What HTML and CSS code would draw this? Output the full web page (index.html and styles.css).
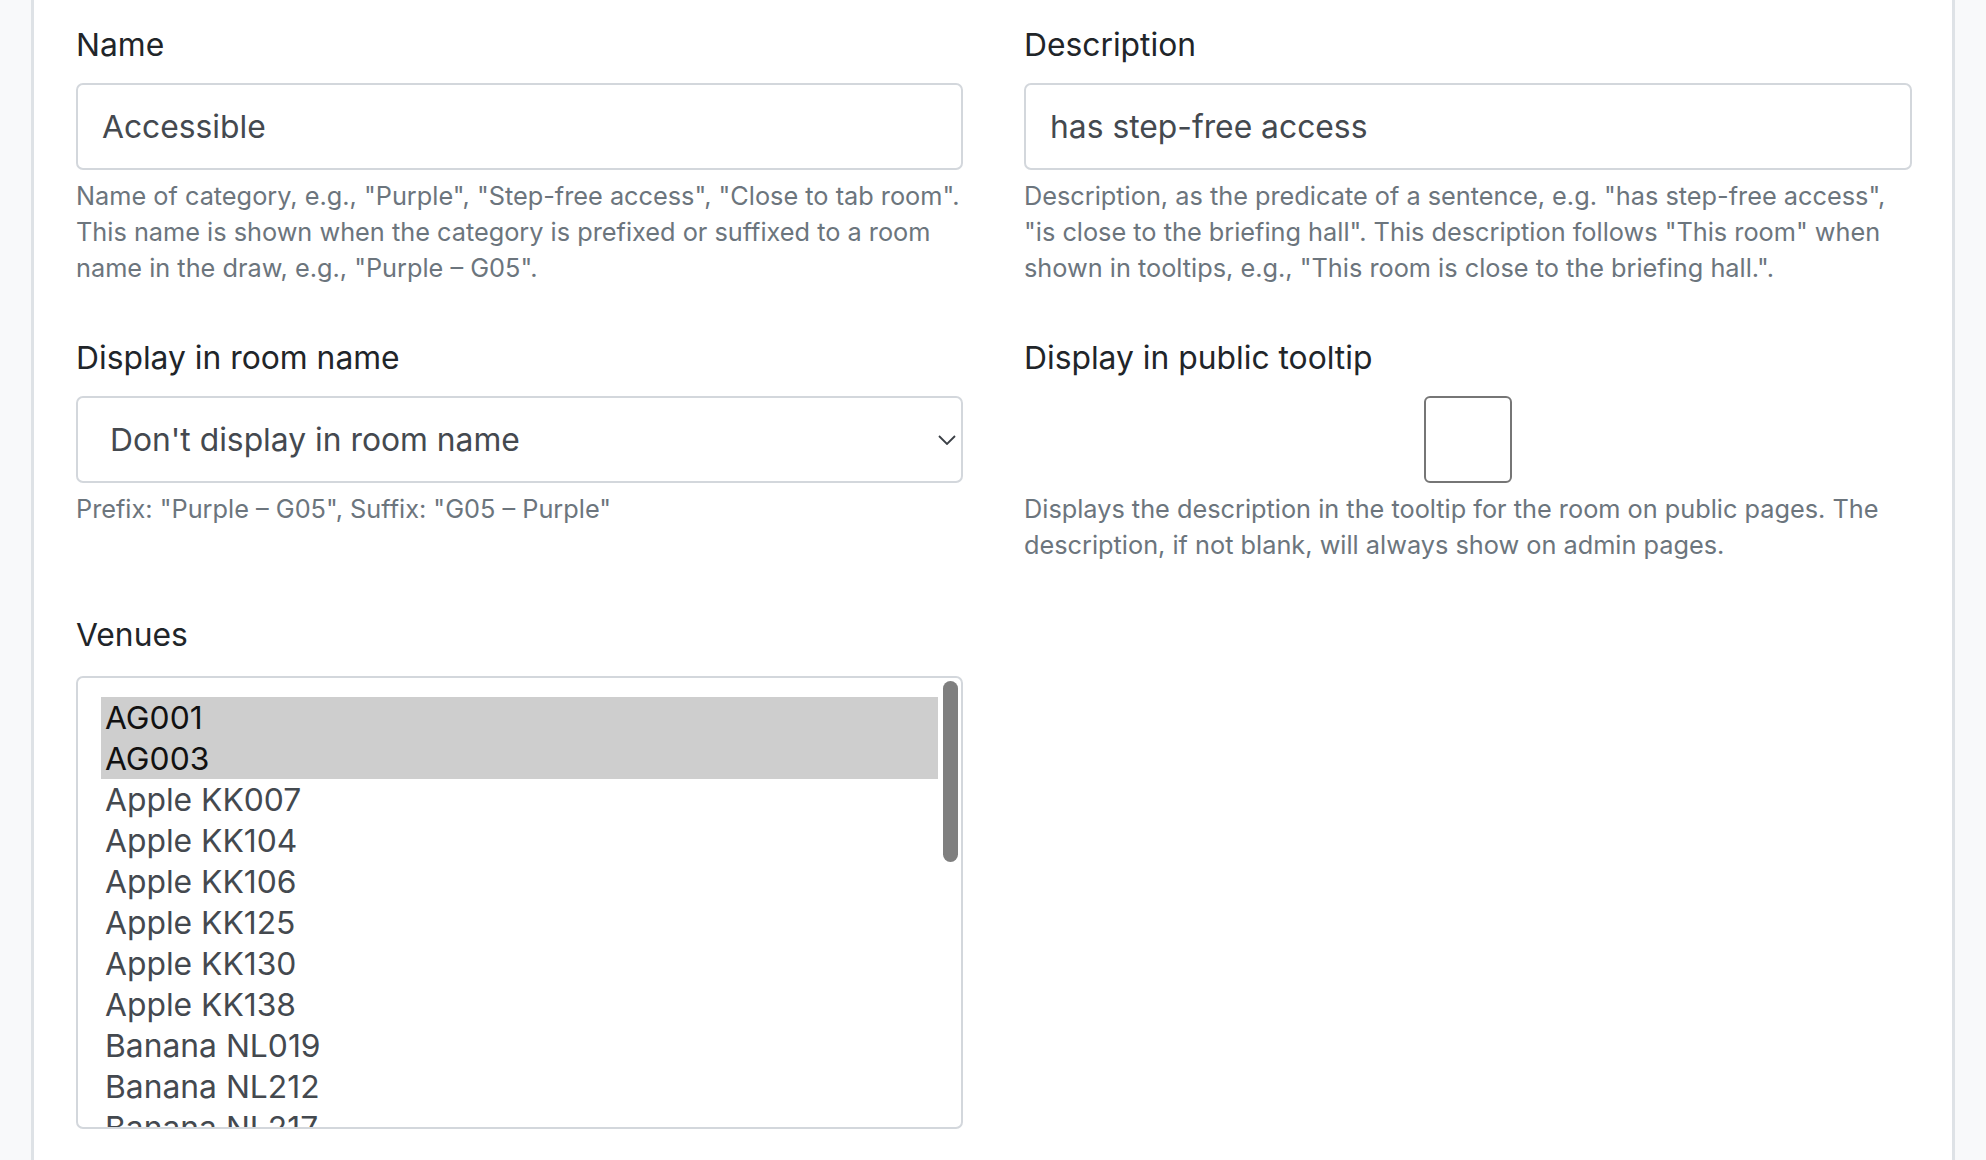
FILE: index.html
```html
<!DOCTYPE html>
<html lang="en">
<head>
<meta charset="utf-8">
<title>Room category</title>
<link rel="stylesheet" href="styles.css">
</head>
<body>
<div class="page">
  <main class="panel">
    <div class="form-grid">
      <div class="group">
        <label class="label">Name</label>
        <input class="control" type="text" value="Accessible">
        <p class="help">Name of category, e.g., "Purple", "Step-free access", "Close to tab room". This name is shown when the category is prefixed or suffixed to a room name in the draw, e.g., "Purple – G05".</p>
      </div>
      <div class="group">
        <label class="label">Description</label>
        <input class="control" type="text" value="has step-free access">
        <p class="help">Description, as the predicate of a sentence, e.g. "has step-free access", "is close to the briefing hall". This description follows "This room" when shown in tooltips, e.g., "This room is close to the briefing hall.".</p>
      </div>
      <div class="group">
        <label class="label">Display in room name</label>
        <div class="select">
          <span class="select-text">Don't display in room name</span>
          <svg class="chevron" width="18" height="10" viewBox="0 0 18 10"><polyline points="1,1 9,9 17,1" fill="none" stroke="#3a3f45" stroke-width="1.8"/></svg>
        </div>
        <p class="help">Prefix: "Purple – G05", Suffix: "G05 – Purple"</p>
      </div>
      <div class="group">
        <label class="label">Display in public tooltip</label>
        <div class="check-wrap"><span class="checkbox"></span></div>
        <p class="help">Displays the description in the tooltip for the room on public pages. The description, if not blank, will always show on admin pages.</p>
      </div>
      <div class="group">
        <label class="label">Venues</label>
        <div class="listbox">
          <div class="option selected">AG001</div>
          <div class="option selected">AG003</div>
          <div class="option">Apple KK007</div>
          <div class="option">Apple KK104</div>
          <div class="option">Apple KK106</div>
          <div class="option">Apple KK125</div>
          <div class="option">Apple KK130</div>
          <div class="option">Apple KK138</div>
          <div class="option">Banana NL019</div>
          <div class="option">Banana NL212</div>
          <div class="option">Banana NL217</div>
          <div class="option">Banana NL220</div>
          <span class="thumb"></span>
        </div>
      </div>
    </div>
  </main>
</div>
</body>
</html>
```
FILE: styles.css
```css
* { box-sizing: border-box; }
html, body { margin: 0; padding: 0; }
body {
  background: #f8f9fa;
  font-family: Inter, "Noto Sans", sans-serif;
  color: #212529;
  overflow: hidden;
}
.page {
  padding: 0 31px;
  min-height: 100vh;
}
.panel {
  background: #fff;
  border-left: 3px solid #dee2e6;
  border-right: 3px solid #dee2e6;
  min-height: 100vh;
  padding: 22px 40px 0 42px;
}
.form-grid {
  display: grid;
  grid-template-columns: 887px 888px;
  column-gap: 61px;
  row-gap: 49px;
  align-items: start;
}
.group { display: flex; flex-direction: column; }
.label {
  font-size: 31.8px;
  line-height: 45px;
  margin-bottom: 16px;
  color: #212529;
}
.control {
  height: 87px;
  width: 100%;
  border: 2px solid #d3d7dc;
  border-radius: 7px;
  padding: 0 24px;
  font-family: Inter, "Noto Sans", sans-serif;
  font-size: 31.8px;
  color: #44494f;
  background: #fff;
  outline: none;
}
.help {
  margin: 8px 0 0;
  font-size: 25.3px;
  line-height: 36px;
  color: #6c757d;
}
.select {
  height: 87px;
  border: 2px solid #d3d7dc;
  border-radius: 7px;
  display: flex;
  align-items: center;
  justify-content: space-between;
  padding: 0 5px 0 32px;
  font-size: 31.8px;
  color: #44494f;
}
.chevron { display: block; }
.check-wrap {
  height: 87px;
  display: flex;
  justify-content: center;
}
.checkbox {
  width: 88px;
  height: 87px;
  border: 2px solid #767676;
  border-radius: 6px;
  background: #fff;
}
.listbox {
  position: relative;
  height: 453px;
  margin-top: 3px;
  border: 2px solid #d3d7dc;
  border-radius: 7px;
  padding: 19px 23px 0 23px;
  overflow: hidden;
}
.option {
  height: 41px;
  line-height: 41px;
  padding-left: 4px;
  font-size: 31.8px;
  color: #44494f;
  white-space: nowrap;
}
.option.selected {
  background: #cecece;
  color: #111;
}
.thumb {
  position: absolute;
  top: 3px;
  right: 3px;
  width: 15px;
  height: 181px;
  border-radius: 8px;
  background: #7f7f7f;
}
```
